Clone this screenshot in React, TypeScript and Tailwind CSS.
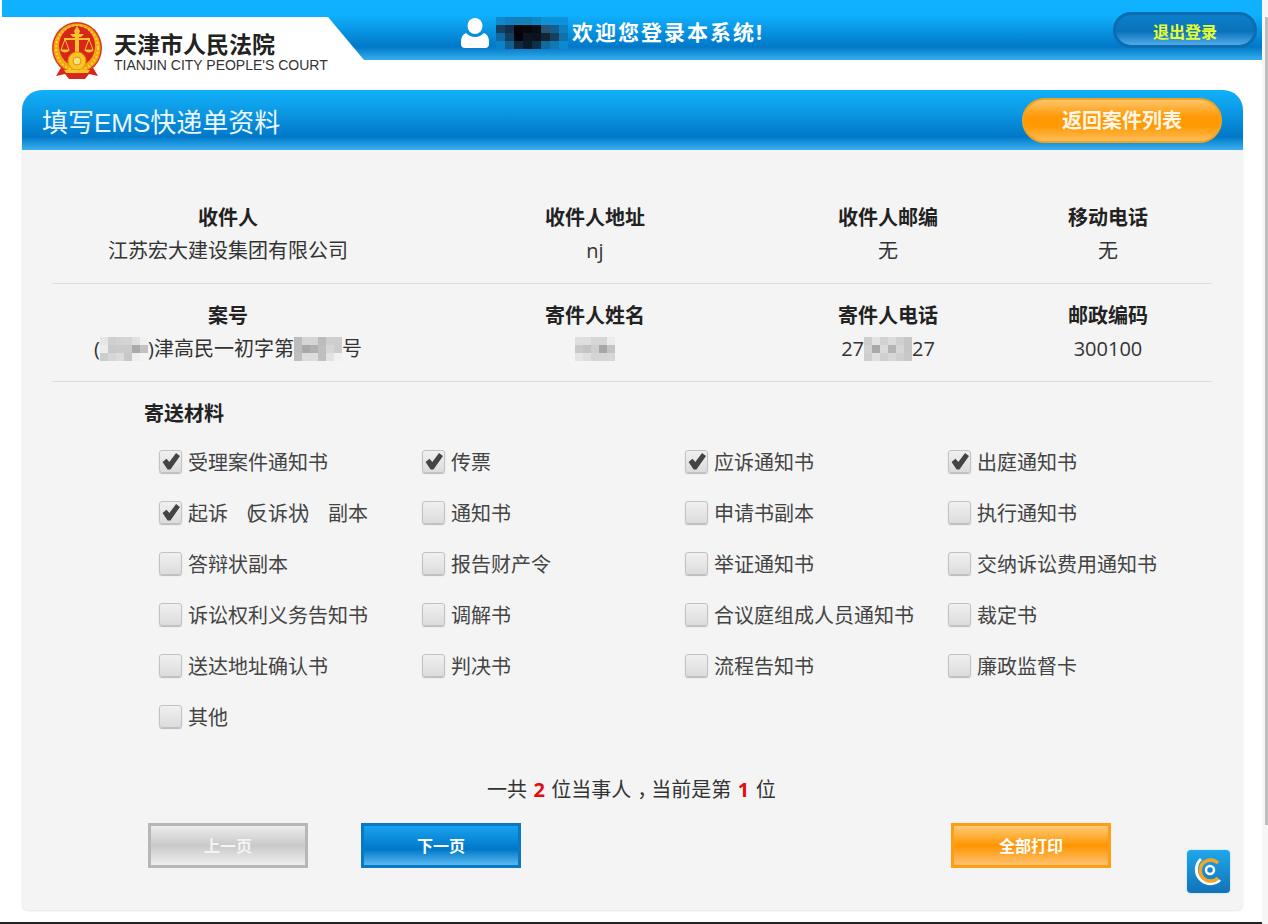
const caseA = [
  ["#e6e6e6", "#cfcfcf", "#d3d3d3", "#d4d4d4", "#e0e0e0", "#f0f0f0"],
  ["#ececec", "#c9c9c9", "#cbcbcb", "#cbcbcb", "#a9a9a9", "#c2c2c2"],
  ["#cdcdcd", "#d6d6d6", "#dcdcdc", "#c8c8c8", "#efefef", "#f3f3f3"],
];
const caseB = [
  ["#bdbdbd", "#d5d5d5", "#d5d5d5", "#bcbcbc", "#cfcfcf", "#cecece"],
  ["#bcbcbc", "#a8a8a8", "#b0b0b0", "#bfbfbf", "#d6d6d6", "#cdcdcd"],
  ["#bebebe", "#dcdcdc", "#dcdcdc", "#bfbfbf", "#e2e2e2", "#f1f1f1"],
];
const nameBlur = [
  ["#dedede", "#dedede", "#d6d6d6", "#d6d6d6", "#ebebeb"],
  ["#c9c9c9", "#c4c4c4", "#cfcfcf", "#a6a6a6", "#c4c4c4"],
  ["#e4e4e4", "#dedede", "#d4d4d4", "#d6d6d6", "#d6d6d6"],
];
const phoneBlur = [
  ["#cdcdcd", "#e3e3e3", "#d2d2d2", "#dbdbdb", "#cfcfcf", "#c6c6c6"],
  ["#d2d2d2", "#a9a9a9", "#dadada", "#b4b4b4", "#d6d6d6", "#c6c6c6"],
  ["#cfcfcf", "#dfdfdf", "#cecece", "#d6d6d6", "#cfcfcf", "#c8c8c8"],
];
const userBlur = [
  ["#1088cc", "#0f80c2", "#1580b8", "#1580b8", "#1088c8", "#0e92d8", "#0e92d8", "#0e92d8"],
  ["#143f63", "#10304e", "#050609", "#07090d", "#0b0e13", "#2b5474", "#135f90", "#0f7fc0"],
  ["#0f6aa0", "#123f5e", "#030407", "#0c1622", "#0b141e", "#122436", "#15405f", "#0f72ad"],
  ["#0a83c8", "#135f90", "#0e2a40", "#0a1a28", "#0e3048", "#126a9c", "#1278b4", "#0a8ad0"],
];

const materials: [React.ReactNode, boolean][] = [
  ["受理案件通知书", true],
  ["传票", true],
  ["应诉通知书", true],
  ["出庭通知书", true],
  [
    <>
      起诉<span className="inline-block translate-x-[6px]">（</span>反诉状
      <span className="inline-block -translate-x-[6px]">）</span>副本
    </>,
    true,
  ],
  ["通知书", false],
  ["申请书副本", false],
  ["执行通知书", false],
  ["答辩状副本", false],
  ["报告财产令", false],
  ["举证通知书", false],
  ["交纳诉讼费用通知书", false],
  ["诉讼权利义务告知书", false],
  ["调解书", false],
  ["合议庭组成人员通知书", false],
  ["裁定书", false],
  ["送达地址确认书", false],
  ["判决书", false],
  ["流程告知书", false],
  ["廉政监督卡", false],
  ["其他", false],
];

const Mosaic = ({ cells, cw, ch }: { cells: string[][]; cw: number; ch: number }) => (
  <svg width={cells[0].length * cw} height={cells.length * ch} className="block shrink-0">
    {cells.map((row, y) =>
      row.map((c, x) => <rect key={`${x}-${y}`} x={x * cw} y={y * ch} width={cw} height={ch} fill={c} />)
    )}
  </svg>
);

const Emblem = () => (
  <svg width="50" height="58" viewBox="0 0 50 58" className="shrink-0">
    <path d="M10 44 L4 54 L13 52 L17 57 L33 57 L37 52 L46 54 L40 44 Z" fill="#d9261c" />
    <ellipse cx="25" cy="26" rx="25" ry="26" fill="#d9381c" />
    <ellipse cx="25" cy="26" rx="23.5" ry="24.5" fill="#f2a50c" />
    <ellipse cx="25" cy="26" rx="21" ry="22" fill="none" stroke="#ffd24a" strokeWidth="2" strokeDasharray="2 2" />
    <ellipse cx="25" cy="24" rx="18" ry="20" fill="#d9261c" />
    <path d="M25 4 L28 9 L27 12 L32 12 L29 15 L27 15 L27 34 L23 34 L23 15 L21 15 L18 12 L23 12 L22 9 Z" fill="#f7c52a" />
    <path d="M12 16 L38 16 L38 18 L12 18 Z" fill="#f7c52a" />
    <path d="M13 17 L9 28 L17 28 Z M37 17 L33 28 L41 28 Z" fill="none" stroke="#f7c52a" strokeWidth="1" />
    <path d="M8 28 L18 28 Q13 33 8 28 Z M32 28 L42 28 Q37 33 32 28 Z" fill="#f7c52a" />
    <circle cx="25" cy="39" r="9" fill="#f7c52a" stroke="#e58f0a" strokeWidth="1" />
    <circle cx="25" cy="39" r="4" fill="#fbe27a" stroke="#e58f0a" strokeWidth="1" />
    <path d="M12 48 L38 48 L36 51 L14 51 Z" fill="#f7c52a" />
  </svg>
);

const UserIcon = () => (
  <svg width="28" height="30" viewBox="0 0 28 30" className="block shrink-0">
    <ellipse cx="14" cy="8" rx="7.5" ry="8" fill="#fff" />
    <path d="M5 15 Q9 19 14 19 Q19 19 23 15 Q28 17 28 24 L28 26 Q28 30 24 30 L4 30 Q0 30 0 26 L0 24 Q0 17 5 15 Z" fill="#fff" />
  </svg>
);

const Check = () => (
  <svg width="18" height="17" viewBox="0 0 16 15">
    <path d="M0.5 8 L4 5 L6.5 8 L12.5 0 L16 2.5 L7.5 14.5 L5 14.5 Z" fill="#444" />
  </svg>
);

const Box = ({ checked }: { checked: boolean }) => (
  <span className="-mt-[2px] flex h-[23px] w-[23px] shrink-0 items-center justify-center rounded-[3px] border border-[#c2c2c2] bg-[linear-gradient(#f0f0f0,#dcdcdc)] shadow-[0_1px_1px_#bbb]">
    {checked && <Check />}
  </span>
);

const Cell = ({ title, children, className = "" }: { title: string; children: React.ReactNode; className?: string }) => (
  <div className={className}>
    <div className="text-center text-[20px] leading-[33px] font-bold text-[#222]">{title}</div>
    <div className="flex h-[33px] items-center justify-center text-[20px] text-[#333]">{children}</div>
  </div>
);

const InfoRow = ({ children }: { children: React.ReactNode }) => (
  <div className="mx-[30px] grid w-[1160px] grid-cols-[352px_382px_204px_222px] border-b border-[#dcdcdc] pt-[15px] pb-[16px]">
    {children}
  </div>
);

export default function App() {
  return (
    <div className="flex h-[924px] w-[1268px] overflow-hidden bg-white font-['Open_Sans','Noto_Sans_CJK_SC',sans-serif]">
      <div className="flex w-[1262px] flex-col">
        <header className="ml-[2px] flex h-[60px] w-[1260px] shrink-0 bg-[linear-gradient(#10b2ff_0%,#0fb0fd_25%,#0078c8_78%,#36aeec_100%)]">
          <div className="relative mt-[17px] h-[43px] w-[362px] shrink-0">
            <div className="absolute inset-0 bg-white [clip-path:polygon(0_0,326px_0,362px_43px,0_43px)]" />
            <div className="relative flex items-start pt-[5px] pl-[50px]">
              <Emblem />
              <div className="ml-[12px] pt-[10px]">
                <div className="text-[23px] leading-[24px] font-bold text-[#222]">天津市人民法院</div>
                <div className="font-['Liberation_Sans',sans-serif] text-[14px] leading-[18px] whitespace-nowrap text-[#333]">
                  TIANJIN CITY PEOPLE'S COURT
                </div>
              </div>
            </div>
          </div>
          <div className="ml-[97px] flex h-[50px] items-center pt-[15px]">
            <UserIcon />
            <div className="ml-[7px]">
              <Mosaic cells={userBlur} cw={9} ch={8} />
            </div>
            <span className="ml-[4px] text-[21px] font-bold tracking-[2px] whitespace-nowrap text-white">欢迎您登录本系统!</span>
          </div>
          <button className="mt-[12px] mr-[5px] ml-auto flex h-[36px] w-[144px] items-center justify-center rounded-full border-[3px] border-[#0b6db0] bg-[linear-gradient(#0c7fca,#0a72ba_55%,#4faaea)] pt-[3px] text-[16px] font-bold text-[#e8ff2e]">
            退出登录
          </button>
        </header>

        <main className="relative mt-[30px] ml-[22px] h-[820px] w-[1221px] shrink-0 rounded-t-[20px] rounded-b-[6px] bg-[#f4f4f4] shadow-[0_1px_2px_#e4e4e4]">
          <div className="flex h-[60px] items-start justify-between rounded-t-[20px] bg-[linear-gradient(#10b0fb_0%,#0e9de8_30%,#0078c8_78%,#3cb0ee_100%)] pr-[21px] pl-[20px]">
            <h1 className="pt-[14px] font-['Liberation_Sans','Noto_Sans_CJK_SC',sans-serif] text-[26px] leading-[38px] font-normal text-[#eaf7ff]">
              填写EMS快递单资料
            </h1>
            <button className="mt-[8px] flex h-[45px] w-[200px] items-center justify-center rounded-full border-2 border-[#f0a41e] bg-[linear-gradient(#ffc56c,#ff9a05_40%,#ff9a05_65%,#ffbd5a)] text-[20px] font-bold text-[#fff6e8]">
              返回案件列表
            </button>
          </div>

          <div className="pt-[36px]">
            <InfoRow>
              <Cell title="收件人">江苏宏大建设集团有限公司</Cell>
              <Cell title="收件人地址">nj</Cell>
              <Cell title="收件人邮编">无</Cell>
              <Cell title="移动电话" className="pl-[14px]">无</Cell>
            </InfoRow>
            <InfoRow>
              <Cell title="案号">
                (<Mosaic cells={caseA} cw={8} ch={8} />)津高民一初字第<Mosaic cells={caseB} cw={8} ch={8} />号
              </Cell>
              <Cell title="寄件人姓名">
                <Mosaic cells={nameBlur} cw={8} ch={8} />
              </Cell>
              <Cell title="寄件人电话">
                27<Mosaic cells={phoneBlur} cw={8} ch={8} />27
              </Cell>
              <Cell title="邮政编码" className="pl-[14px]">300100</Cell>
            </InfoRow>
          </div>

          <h2 className="mt-[20px] ml-[122px] text-[20px] leading-[24px] font-bold text-[#222]">寄送材料</h2>

          <div className="mt-[11px] ml-[137px] grid grid-cols-[263px_263px_263px_263px]">
            {materials.map(([label, checked], i) => (
              <label key={i} className="flex h-[51px] items-center gap-[6px] text-[20px] whitespace-nowrap text-[#444]">
                <Box checked={checked} />
                <span>{label}</span>
              </label>
            ))}
          </div>

          <p className="mt-[35px] ml-[465px] text-[20px] leading-[24px] [word-spacing:1.25px] whitespace-pre text-[#333]">
            一共 <b className="text-[#e30d0d]">2</b> 位当事人<span className="inline-block translate-x-[6px]">，</span>当前是第 <b className="text-[#e30d0d]">1</b> 位
          </p>

          <div className="mt-[21px] ml-[126px] flex gap-[53px]">
            <button className="h-[45px] w-[160px] border-[3px] border-[#b7b7b7] bg-[linear-gradient(#ececec,#c9c9c9_50%,#efefef)] text-[16px] font-bold text-[#f4f4f4]">
              上一页
            </button>
            <button className="h-[45px] w-[160px] border-[3px] border-[#0a78c2] bg-[linear-gradient(#18a2ef,#0078c8_60%,#5abaf2)] text-[16px] font-bold text-white">
              下一页
            </button>
            <button className="ml-[377px] h-[45px] w-[160px] border-[3px] border-[#ff9e14] bg-[linear-gradient(#ffcb78,#ff9500_50%,#ffc272)] text-[16px] font-bold text-white">
              全部打印
            </button>
          </div>

          <div className="absolute right-[13px] bottom-[17px] h-[43px] w-[43px] rounded-[4px] bg-[linear-gradient(#1ea8ea,#1272b8)] shadow-[0_0_2px_#9fd4f2]">
            <svg width="43" height="43" viewBox="0 0 43 43">
              <path d="M14 9 A14 14 0 0 0 33 30" fill="none" stroke="#fff" strokeWidth="3" />
              <path d="M31 13 A10.5 10.5 0 1 0 31 28" fill="none" stroke="#f5a623" strokeWidth="3.5" />
              <circle cx="23" cy="20" r="4" fill="#1a86c8" stroke="#fff" strokeWidth="2.5" />
            </svg>
          </div>
        </main>

        <div className="mt-auto h-[2px] bg-[#222]" />
      </div>
      <div className="flex w-[6px] flex-col bg-[#f6f6f6] pt-[17px] pl-[3px]">
        <div className="h-[808px] bg-[#bdbdbd]" />
      </div>
    </div>
  );
}
